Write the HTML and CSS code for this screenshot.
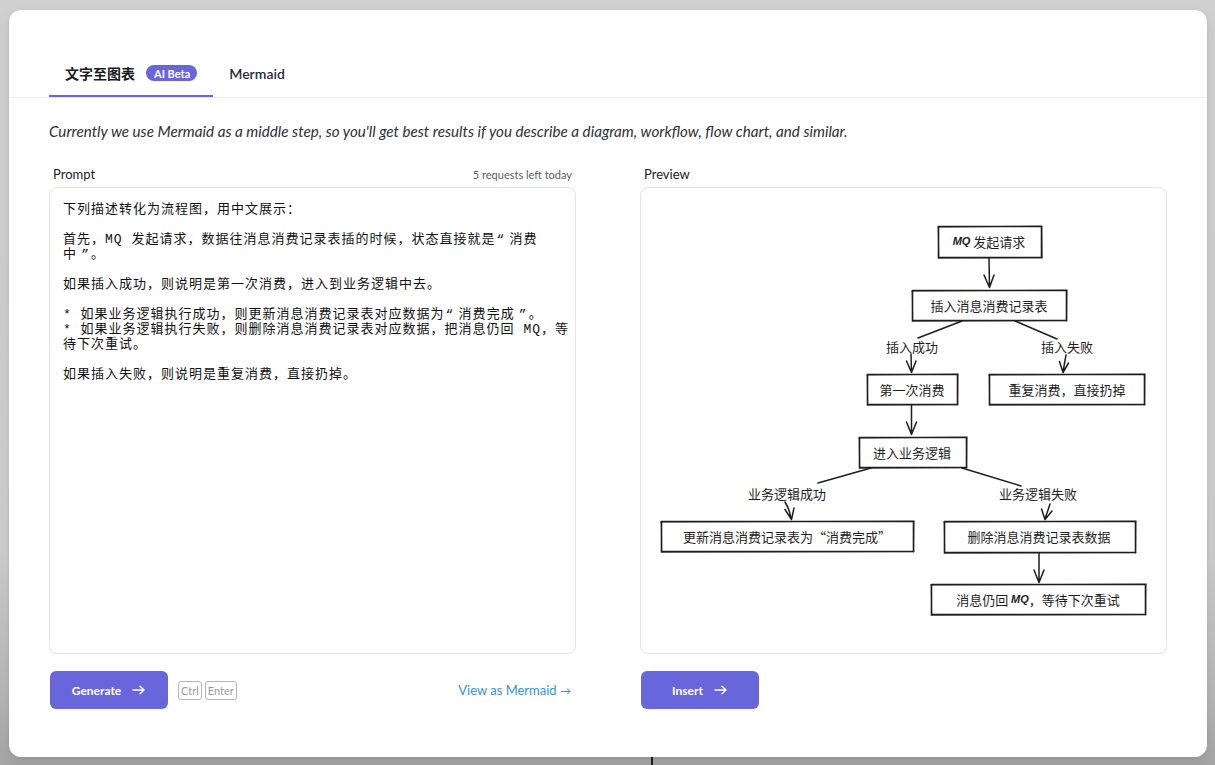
FILE: index.html
```html
<!DOCTYPE html>
<html lang="zh">
<head>
<meta charset="utf-8">
<title>文字至图表</title>
<link rel="stylesheet" href="styles.css">
</head>
<body>
<div class="canvas-stroke"></div>
<div class="dialog">
  <div class="tabs">
    <div class="tab tab-active">
      <span class="tab-title">文字至图表</span>
      <span class="badge">AI Beta</span>
    </div>
    <div class="tab">
      <span class="tab-title tab-latin">Mermaid</span>
    </div>
  </div>
  <div class="content">
    <p class="desc">Currently we use Mermaid as a middle step, so you'll get best results if you describe a diagram, workflow, flow chart, and similar.</p>
    <div class="columns">
      <div class="column">
        <div class="label-row">
          <span class="label">Prompt</span>
          <span class="quota">5 requests left today</span>
        </div>
        <div class="prompt" contenteditable="true" role="textbox" aria-multiline="true" spellcheck="false">下列描述转化为流程图，用中文展示：

首先，MQ 发起请求，数据往消息消费记录表插的时候，状态直接就是<span class="fw fw-open">“</span>消费<span class="nowrap">中<span class="fw fw-close">”</span>。</span>

如果插入成功，则说明是第一次消费，进入到业务逻辑中去。

* 如果业务逻辑执行成功，则更新消息消费记录表对应数据为<span class="fw fw-open">“</span>消费<span class="nowrap">完成<span class="fw fw-close">”</span>。</span>
* 如果业务逻辑执行失败，则删除消息消费记录表对应数据，把消息仍回 MQ，等待下次重试。

如果插入失败，则说明是重复消费，直接扔掉。</div>
        <div class="actions">
          <button class="btn">Generate
            <svg class="btn-arrow" width="14" height="10" viewBox="0 0 14 10"><path d="M1 5h11M8 1.2l4 3.8-4 3.8" fill="none" stroke="#fff" stroke-width="1.5" stroke-linecap="round" stroke-linejoin="round"/></svg>
          </button>
          <span class="keys"><kbd>Ctrl</kbd><kbd>Enter</kbd></span>
          <a class="link">View as Mermaid <span class="link-arrow">→</span></a>
        </div>
      </div>
      <div class="column">
        <div class="label-row">
          <span class="label">Preview</span>
        </div>
        <div class="preview">
          <svg class="diagram" width="525" height="465" viewBox="641 188 525 465">
            <g fill="none" stroke="#1e1e1e" stroke-linecap="round" stroke-linejoin="round">
              <rect x="938.5" y="226.5" width="103" height="31" stroke-width="1.6"/>
              <path d="M937.5 227.2 L1042 226 M1041.8 226.5 L1042.3 258.2 M1042 257.8 L938 258.3 M938.8 258 L938.2 226.5" stroke-width="0.7"/>
              <rect x="912.5" y="290.5" width="154" height="30" stroke-width="1.6"/>
              <path d="M911.6 291.2 L1067.3 290 M1067 290.3 L1066.6 321.2 M1067 320.6 L912 321.4 M912.7 321 L912.2 290.4" stroke-width="0.7"/>
              <rect x="867.5" y="374.5" width="90" height="30" stroke-width="1.6"/>
              <path d="M866.7 375.1 L958.3 374 M958 374.2 L957.6 405.1 M958.1 404.7 L867 405.3 M867.7 405 L867.2 374.3" stroke-width="0.7"/>
              <rect x="989.5" y="374.5" width="155" height="30" stroke-width="1.6"/>
              <path d="M988.6 375.1 L1145.3 374 M1145 374.2 L1144.6 405.1 M1145.1 404.7 L989 405.3 M989.7 405 L989.2 374.3" stroke-width="0.7"/>
              <rect x="859.5" y="437.5" width="107" height="30" stroke-width="1.6"/>
              <path d="M858.6 438.2 L967.3 437 M967 437.3 L966.6 468.2 M967 467.6 L859 468.4 M859.7 468 L859.2 437.4" stroke-width="0.7"/>
              <rect x="661.5" y="521.5" width="252" height="30" stroke-width="1.6"/>
              <path d="M660.6 522.2 L914.3 521 M914 521.3 L913.6 552.2 M914 551.6 L661 552.4 M661.7 552 L661.2 521.4" stroke-width="0.7"/>
              <rect x="944.5" y="521.5" width="191" height="31" stroke-width="1.6"/>
              <path d="M943.6 522.2 L1136.3 521 M1136 521.3 L1135.6 553.2 M1136 552.6 L944 553.4 M944.7 553 L944.2 521.4" stroke-width="0.7"/>
              <rect x="931.5" y="584.5" width="214" height="30" stroke-width="1.6"/>
              <path d="M930.6 585.2 L1146.3 584 M1146 584.3 L1145.6 615.2 M1146 614.6 L931 615.4 M931.7 615 L931.2 584.4" stroke-width="0.7"/>

              <g stroke-width="1.5">
                <path d="M989 258 L989.5 287 M984 275 L989.5 287.5 L994 275"/>
                <path d="M962 321 L918 338"/>
                <path d="M1015 321 L1057 339"/>
                <path d="M911 354 L911.5 372 M906.5 361 L911.5 372.5 L916 361"/>
                <path d="M1066 355 L1063 372 M1059.5 361.5 L1063 372.5 L1068.5 363"/>
                <path d="M911.5 405 L911.5 434 M906.5 422 L911.5 434.5 L916.5 422"/>
                <path d="M871 468 L818 483"/>
                <path d="M962 468 L1021 486"/>
                <path d="M785 502 Q790 510 791 519 M785 509.5 L791.5 519.5 L794 508"/>
                <path d="M1050 504 L1045 519 M1041.5 509 L1045 519.5 L1052 511"/>
                <path d="M1039 553 L1039 582 M1034 570 L1039 582.5 L1044 570"/>
              </g>
            </g>
            <g class="dtext" text-anchor="middle" dominant-baseline="central">
              <text x="989" y="241"><tspan class="hand">MQ</tspan> 发起请求</text>
              <text x="989" y="305">插入消息消费记录表</text>
              <text x="912" y="346">插入成功</text>
              <text x="1067" y="346">插入失败</text>
              <text x="912" y="389">第一次消费</text>
              <text x="1067" y="389">重复消费，直接扔掉</text>
              <text x="912" y="452">进入业务逻辑</text>
              <text x="787" y="493">业务逻辑成功</text>
              <text x="1038" y="493">业务逻辑失败</text>
              <text x="787" y="536">更新消息消费记录表为“消费完成”</text>
              <text x="1039" y="536">删除消息消费记录表数据</text>
              <text x="1038" y="599">消息仍回 <tspan class="hand">MQ</tspan>，等待下次重试</text>
            </g>
          </svg>
        </div>
        <div class="actions">
          <button class="btn">Insert
            <svg class="btn-arrow" width="14" height="10" viewBox="0 0 14 10"><path d="M1 5h11M8 1.2l4 3.8-4 3.8" fill="none" stroke="#fff" stroke-width="1.5" stroke-linecap="round" stroke-linejoin="round"/></svg>
          </button>
        </div>
      </div>
    </div>
  </div>
</div>
</body>
</html>
```

FILE: styles.css
```css
html, body {
  margin: 0;
  padding: 0;
}

body {
  position: relative;
  height: 765px;
  overflow: hidden;
  background: linear-gradient(to bottom, #d0d0d0 0%, #cdcdcd 72%, #b6b6b6 91%, #a5a5a5 100%);
  font-family: "Lato", "Noto Sans CJK SC", sans-serif;
  color: #1b1b1f;
}

.canvas-stroke {
  position: absolute;
  left: 651px;
  top: 750px;
  width: 2px;
  height: 20px;
  background: #1e1e1e;
}

.dialog {
  position: relative;
  margin: 10px 0 0 9px;
  width: 1198px;
  height: 747px;
  box-sizing: border-box;
  background: #fff;
  border-radius: 12px;
  box-shadow: 0 1px 3px rgba(0, 0, 0, 0.08), 0 6px 16px rgba(0, 0, 0, 0.08);
}

.tabs {
  height: 88px;
  box-sizing: border-box;
  border-bottom: 1px solid #ececf1;
  display: flex;
  align-items: flex-end;
  padding-left: 40px;
}

.tab {
  height: 46px;
  box-sizing: border-box;
  display: flex;
  align-items: center;
  gap: 11px;
  padding: 0 16px;
  border-bottom: 2px solid transparent;
}

.tab-active {
  border-bottom-color: #6965db;
}

.tab-title {
  font-family: "Noto Sans CJK SC", sans-serif;
  font-size: 14px;
  font-weight: 600;
  color: #1b1b1f;
}

.tab-latin {
  font-family: "Lato", sans-serif;
  font-size: 14px;
  font-weight: 600;
  color: #2b2b33;
}

.badge {
  display: inline-flex;
  align-items: center;
  height: 16px;
  padding: 0 7px 0 8px;
  border-radius: 8px;
  background: #6965db;
  color: #fff;
  font-family: "Lato", sans-serif;
  font-size: 11px;
  font-weight: 700;
}

.content {
  padding: 0 40px;
}

.desc {
  margin: 23px 0 0;
  line-height: 20px;
  font-size: 15.2px;
  font-style: italic;
  color: #2f2f36;
}

.columns {
  margin-top: 24px;
  display: grid;
  grid-template-columns: 527px 527px;
  column-gap: 64px;
}

.column {
  display: flex;
  flex-direction: column;
}

.label-row {
  height: 18px;
  margin-bottom: 4px;
  padding: 0 4px;
  display: flex;
  align-items: center;
  justify-content: space-between;
}

.label {
  font-size: 13px;
  color: #1b1b1f;
}

.quota {
  font-size: 11px;
  color: #5c5c66;
}

.prompt {
  width: 527px;
  height: 467px;
  box-sizing: border-box;
  margin: 0;
  padding: 14px 2px 14px 13px;
  border: 1px solid #e3e3e8;
  border-radius: 8px;
  outline: none;
  white-space: pre-wrap;
  font-family: "Liberation Mono", "Noto Sans CJK SC", monospace;
  font-size: 13px;
  letter-spacing: 1px;
  line-height: 15px;
  color: #111;
  background: #fff;
  overflow: hidden;
}

.nowrap {
  white-space: nowrap;
}

.fw {
  display: inline-block;
  width: 14px;
  height: 15px;
  vertical-align: top;
  line-height: 15px;
  letter-spacing: 0;
  font-family: "Liberation Mono", monospace;
}

.fw-open {
  text-align: left;
  padding-left: 1px;
  box-sizing: border-box;
}

.fw-close {
  text-align: right;
  padding-right: 2px;
  box-sizing: border-box;
}

.preview {
  width: 527px;
  height: 467px;
  box-sizing: border-box;
  border: 1px solid #e3e3e8;
  border-radius: 8px;
  overflow: hidden;
}

.diagram {
  display: block;
}

.dtext {
  font-family: "Noto Sans CJK SC", sans-serif;
  font-size: 13px;
  fill: #1e1e1e;
}

.hand {
  font-family: "Liberation Sans", sans-serif;
  font-style: italic;
  font-weight: 700;
  font-size: 11px;
}

.actions {
  margin-top: 17px;
  display: flex;
  align-items: center;
}

.btn {
  width: 118px;
  height: 38px;
  margin: 0 0 0 1px;
  border: none;
  border-radius: 6px;
  background: #6965db;
  color: #fff;
  font-family: "Lato", sans-serif;
  font-size: 12px;
  font-weight: 700;
  display: inline-flex;
  align-items: center;
  justify-content: center;
  gap: 11px;
  padding: 0;
}

.btn-arrow {
  display: block;
}

.keys {
  margin-left: 10px;
  display: flex;
  gap: 3px;
}

kbd {
  display: inline-flex;
  align-items: center;
  height: 19px;
  box-sizing: border-box;
  padding: 0 2px;
  border: 1px solid #b4b4b8;
  border-radius: 3px;
  font-family: "Lato", sans-serif;
  font-size: 11px;
  color: #9a9aa2;
}

.link {
  margin-left: auto;
  margin-right: 5px;
  font-size: 13px;
  color: #3a8ee6;
  text-decoration: none;
}

.link-arrow {
  font-size: 11px;
}
```
